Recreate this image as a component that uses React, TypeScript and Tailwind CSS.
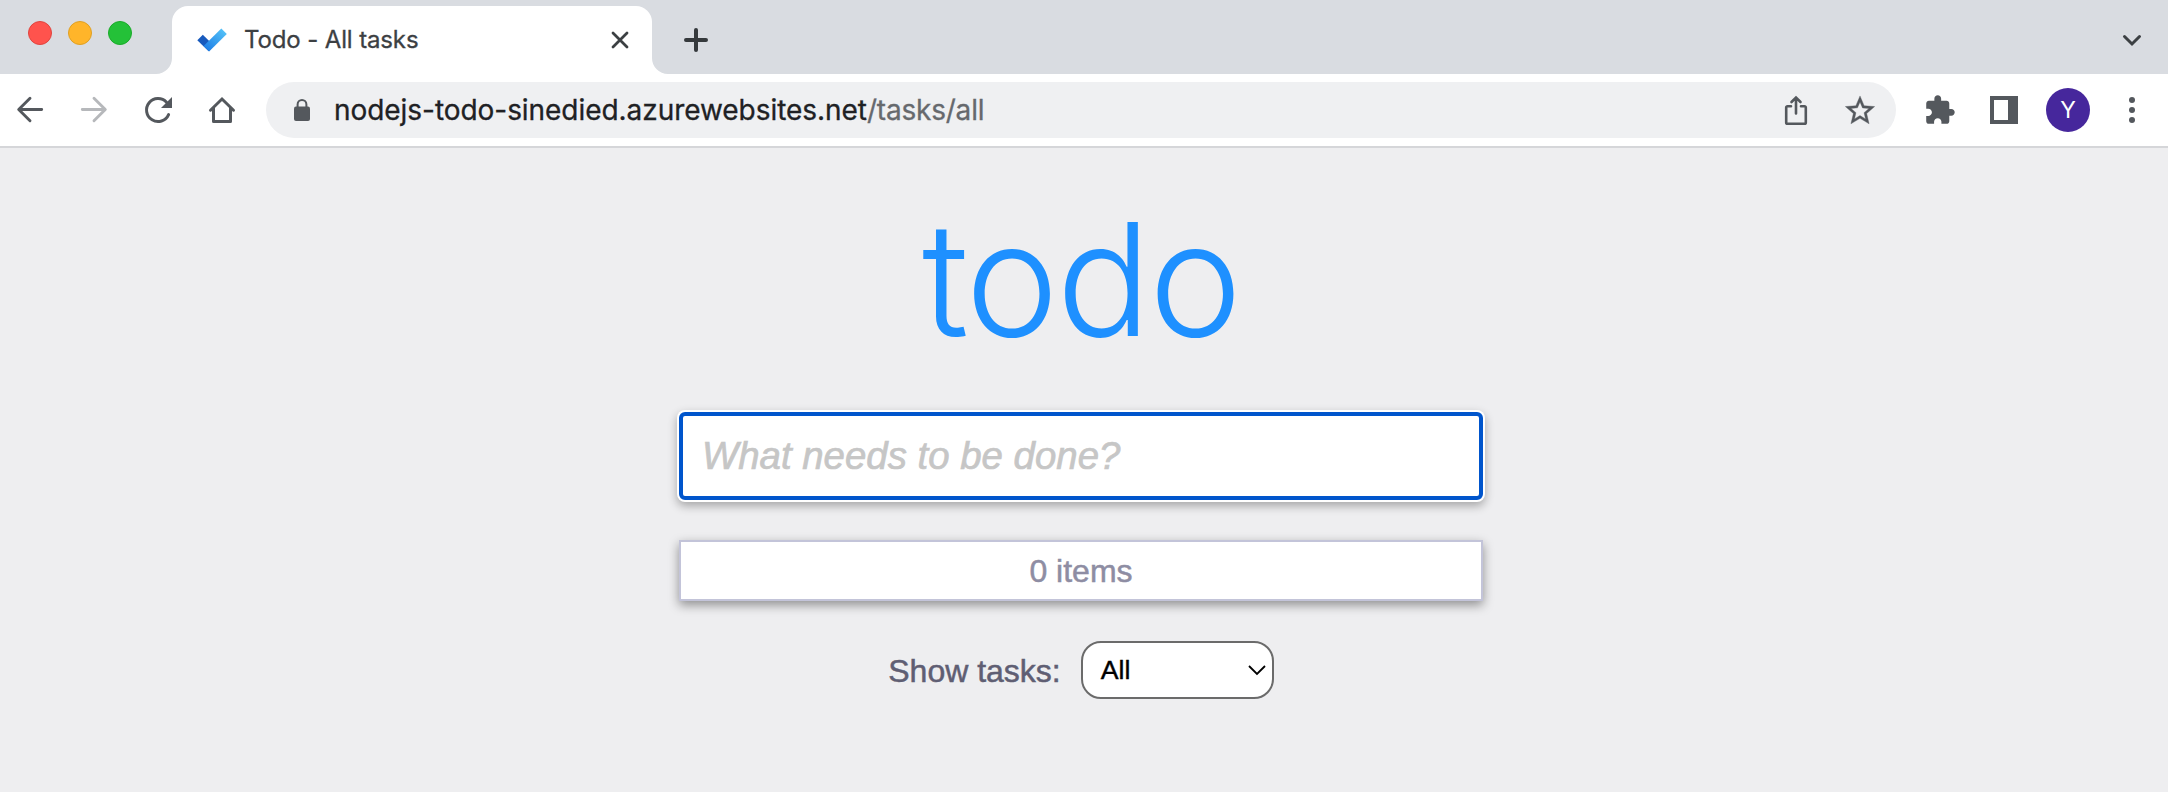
import type { ReactNode } from "react";

function Icon({ children, className = "" }: { children: ReactNode; className?: string }) {
  return (
    <svg viewBox="0 0 32 32" className={`h-8 w-8 shrink-0 ${className}`} fill="none">
      {children}
    </svg>
  );
}

function TabStrip() {
  return (
    <div className="flex h-[74px] items-start bg-[#d9dce1]">
      <div className="flex gap-4 pt-[21px] pl-7">
        <span className="h-6 w-6 rounded-full border border-[#e0443e] bg-[#ff534d]" />
        <span className="h-6 w-6 rounded-full border border-[#dfa023] bg-[#ffb52a]" />
        <span className="h-6 w-6 rounded-full border border-[#1aab29] bg-[#24c138]" />
      </div>
      <svg viewBox="0 0 16 16" className="mt-[58px] ml-6 h-4 w-4 shrink-0">
        <path d="M16 0v16H0A16 16 0 0 0 16 0z" fill="#fff" />
      </svg>
      <div className="mt-1.5 flex h-[68px] w-[480px] shrink-0 items-start rounded-t-2xl bg-white pt-[18px] pl-6">
        <svg viewBox="0 0 32 32" className="h-8 w-8 shrink-0">
          <defs>
            <linearGradient id="check" x1="12" y1="27" x2="30" y2="6" gradientUnits="userSpaceOnUse">
              <stop stopColor="#1f7fe6" />
              <stop offset="1" stopColor="#55c4f8" />
            </linearGradient>
          </defs>
          <path d="M1.3 16.2 6.8 10.8 17.8 21.6 12.6 27.2z" fill="#185abd" />
          <path d="M7.6 22 25.3 4.5 30.8 9.9 13.1 27.5z" fill="url(#check)" />
        </svg>
        <span className="ml-4 flex-1 text-[24px] leading-8 tracking-[-0.13px] whitespace-pre text-[#3c4043] [-webkit-text-stroke:0.3px]">Todo - All tasks</span>
        <Icon className="mr-4">
          <path d="m9 9 14 14M23 9 9 23" stroke="#3c4043" strokeWidth="2.8" strokeLinecap="round" />
        </Icon>
      </div>
      <svg viewBox="0 0 16 16" className="mt-[58px] h-4 w-4 shrink-0">
        <path d="M0 0v16h16A16 16 0 0 1 0 0z" fill="#fff" />
      </svg>
      <Icon className="mt-6 ml-3">
        <path d="M16 6v20M6 16h20" stroke="#35393c" strokeWidth="4" strokeLinecap="round" />
      </Icon>
      <Icon className="mt-6 mr-5 ml-auto">
        <path d="m8.5 12.5 7.5 7.5 7.5-7.5" stroke="#3c4043" strokeWidth="3" strokeLinecap="round" />
      </Icon>
    </div>
  );
}

function Toolbar() {
  return (
    <div className="flex h-[74px] items-center border-b-2 border-[#d5d6d9] bg-white pr-1 pl-[14px]">
      <div className="flex gap-8">
        <Icon>
          <path d="M27.7 15.5H5M16 4.3 4.7 15.5 16 26.7" stroke="#54585d" strokeWidth="2.9" strokeLinecap="round" strokeLinejoin="round" />
        </Icon>
        <Icon>
          <path d="M4.3 15.5H27M16 4.3l11.3 11.2L16 26.7" stroke="#b6b8bb" strokeWidth="2.9" strokeLinecap="round" strokeLinejoin="round" />
        </Icon>
        <Icon>
          <path d="M24.5 8.2A11.5 11.5 0 1 0 26.6 20.6" stroke="#54585d" strokeWidth="3" strokeLinecap="round" />
          <path d="M30 3v11H19z" fill="#54585d" />
        </Icon>
        <Icon>
          <path d="M4.5 16.2 16 5l11.5 11.2" stroke="#54585d" strokeWidth="3" strokeLinecap="round" />
          <path d="M7.5 14v13.5h17V14" stroke="#54585d" strokeWidth="3" strokeLinejoin="round" />
        </Icon>
      </div>
      <div className="ml-7 flex h-14 flex-1 items-center rounded-full bg-[#eff0f2] pr-1 pl-5">
        <Icon>
          <rect x="8" y="12.5" width="16" height="14.5" rx="2" fill="#54585d" />
          <path d="M11.6 13v-2.6a4.4 4.4 0 0 1 8.8 0V13" stroke="#54585d" strokeWidth="2" />
        </Icon>
        <span className="ml-4 flex-1 text-[28px] leading-8 tracking-[-0.05px] whitespace-pre text-[#202124] [-webkit-text-stroke:0.3px]">
          nodejs-todo-sinedied.azurewebsites.net<span className="tracking-[-0.2px] text-[#66696d]">/tasks/all</span>
        </span>
        <div className="flex w-16 justify-center">
          <Icon>
            <path d="M11 12.2H7.5a1.3 1.3 0 0 0-1.3 1.3v15a1.3 1.3 0 0 0 1.3 1.3h17a1.3 1.3 0 0 0 1.3-1.3v-15a1.3 1.3 0 0 0-1.3-1.3H21M16 19.5V4M11.5 8 16 3.5 20.5 8" stroke="#54585d" strokeWidth="2.6" strokeLinecap="round" />
          </Icon>
        </div>
        <div className="flex w-16 justify-center">
          <Icon>
            <path
              transform="translate(-1.6 -1) scale(1.467)"
              fill="#54585d"
              stroke="#54585d"
              strokeWidth="0.25"
              d="M22 9.24l-7.19-.62L12 2 9.19 8.63 2 9.24l5.46 4.73L5.82 21 12 17.27 18.18 21l-1.63-7.03L22 9.24zM12 15.4l-3.76 2.27 1-4.28-3.32-2.88 4.38-.38L12 6.1l1.71 4.04 4.38.38-3.32 2.88 1 4.28L12 15.4z"
            />
          </Icon>
        </div>
      </div>
      <div className="ml-3 flex items-center">
        <div className="flex w-16 justify-center">
          <Icon>
            <path
              transform="translate(-0.5 0) scale(1.357)"
              fill="#54585d"
              d="M20.5 11H19V7c0-1.1-.9-2-2-2h-4V3.5C13 2.12 11.88 1 10.5 1S8 2.12 8 3.5V5H4c-1.1 0-1.99.9-1.99 2v3.8H3.5c1.49 0 2.7 1.21 2.7 2.7s-1.21 2.7-2.7 2.7H2V20c0 1.1.9 2 2 2h3.8v-1.5c0-1.49 1.21-2.7 2.7-2.7 1.49 0 2.7 1.21 2.7 2.7V22H17c1.1 0 2-.9 2-2v-4h1.5c1.38 0 2.5-1.12 2.5-2.5S21.88 11 20.5 11z"
            />
          </Icon>
        </div>
        <div className="flex w-16 justify-center">
          <Icon>
            <path fillRule="evenodd" d="M2 2h28v28H2zM6 6v20h14V6z" fill="#54585d" />
          </Icon>
        </div>
        <div className="flex w-16 justify-center">
          <span className="flex h-11 w-11 items-center justify-center rounded-full bg-[#46279c] text-[23px] text-white">Y</span>
        </div>
        <div className="flex w-16 justify-center">
          <Icon>
            <circle cx="16" cy="6" r="3" fill="#54585d" />
            <circle cx="16" cy="16" r="3" fill="#54585d" />
            <circle cx="16" cy="26" r="3" fill="#54585d" />
          </Icon>
        </div>
      </div>
    </div>
  );
}

function TodoPage() {
  return (
    <main className="flex flex-1 flex-col items-center bg-[#eeeef0] pr-[6px] font-['Liberation_Sans',Arial,sans-serif]">
      <h1 className="mt-[31px] h-[233px] font-['Inter',sans-serif] text-[157px] leading-[200px] font-light tracking-[-2px] text-[#1e90ff]">todo</h1>
      <input
        className="h-[88px] w-[804px] rounded-[6px] border-4 border-[#0055cc] bg-white px-[19px] text-[38.4px] italic shadow-[0_0_0_2px_#fff,0_4px_10px_2px_rgba(0,0,0,0.3)] outline-none placeholder:text-[#c6c6c6] [-webkit-text-stroke:0.7px_#c6c6c6]"
        placeholder="What needs to be done?"
      />
      <div className="mt-10 flex h-[61px] w-[804px] items-center justify-center border-2 border-[#c3c4d9] bg-white text-[32px] text-[#8e8da3] shadow-[0_4px_10px_rgba(0,0,0,0.4)] [-webkit-text-stroke:0.5px]">
        0 items
      </div>
      <div className="mt-10 flex h-[58px] items-center">
        <span className="pt-0.5 text-[32px] text-[#5f5e73] [-webkit-text-stroke:0.5px]">Show tasks:</span>
        <button className="ml-5 flex h-[58px] w-[193px] items-center justify-between rounded-[20px] border-2 border-[#6b6b6b] bg-white pr-[5px] pl-[18px] text-[26.67px] text-black [-webkit-text-stroke:0.4px]">
          All
          <svg viewBox="0 0 20 12" className="h-3 w-5" fill="none">
            <path d="m2 2 8 8 8-8" stroke="#000" strokeWidth="1.8" />
          </svg>
        </button>
      </div>
    </main>
  );
}

export default function App() {
  return (
    <div className="flex h-[792px] w-[2168px] flex-col overflow-hidden font-['Inter',sans-serif]">
      <TabStrip />
      <Toolbar />
      <TodoPage />
    </div>
  );
}
